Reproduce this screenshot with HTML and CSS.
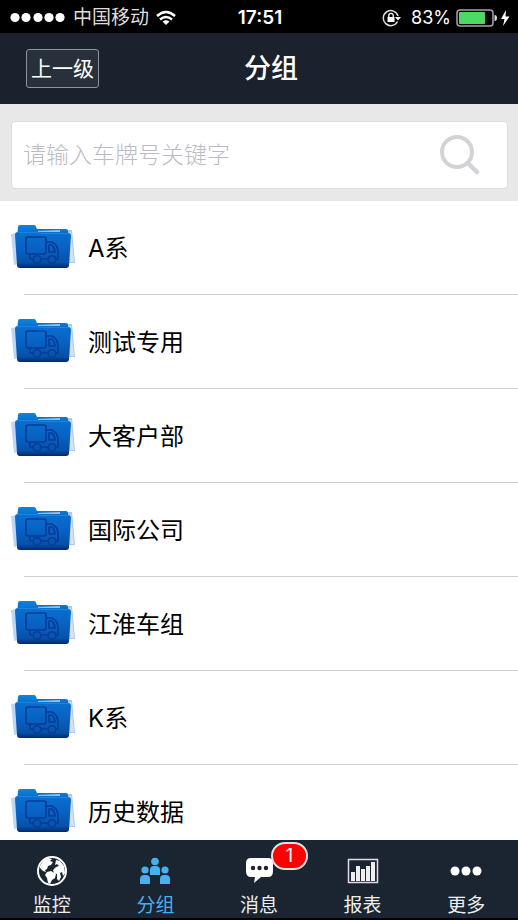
FILE: index.html
```html
<!DOCTYPE html>
<html lang="zh-CN">
<head>
  <meta charset="UTF-8" />
  <meta name="viewport" content="width=device-width, initial-scale=1.0"/>
  <title>分组</title>
  <link rel="stylesheet" href="styles.css">
</head>
<body>
  <!-- Shared icons -->
  <svg class="sprite" width="0" height="0" aria-hidden="true">
    <defs>
      <linearGradient id="folder-front" x1="0" y1="0" x2="0" y2="1">
        <stop offset="0" stop-color="#0a6fd0"/>
        <stop offset="0.5" stop-color="#0760c2"/>
        <stop offset="0.85" stop-color="#0650a8"/>
        <stop offset="1" stop-color="#03286a"/>
      </linearGradient>
      <linearGradient id="folder-back" x1="0" y1="0" x2="0" y2="1">
        <stop offset="0" stop-color="#0b84e0"/>
        <stop offset="1" stop-color="#0661bd"/>
      </linearGradient>
      <symbol id="folder" viewBox="0 0 64 46">
        <path d="M0 10l6-1 3 31-6 1z" fill="#bdd6f5"/>
        <path d="M56 6h5l3 33h-8z" fill="#a9c8f5"/>
        <path d="M59 8h1l3 30h-4z" fill="#d2e2fb"/>
        <path d="M7 3q0-2 2-2h14q2 0 2 2l1 2h29q2 0 2 2v7H6z" fill="url(#folder-back)"/>
        <path d="M27 7l22-1v2H27z" fill="#8fc3f0"/>
        <path d="M7 8h19l4 1h27q3 0 3 3l-2 29q0 3-3 3H9q-3 0-3-3L4 11q0-3 3-3z" fill="url(#folder-front)"/>
        <path d="M7 8.500h19l4 1h27" fill="none" stroke="#1d83dc"/>
        <g fill="none" stroke="#053c96" stroke-width="1.600" stroke-linejoin="round">
          <rect x="15" y="13" width="20" height="17" rx="2"/>
          <path d="M19 30v5h3M30 35h7M35 18h6q6 3 6 10v7h-2M38 21h3q3 3 3 7h-6z"/>
          <circle cx="26" cy="35.500" r="3.800"/>
          <circle cx="41" cy="35.500" r="3.800"/>
        </g>
      </symbol>
    </defs>
  </svg>

  <div class="app">
    <div class="status-bar">
      <div class="status-left">
        <svg class="signal" width="56" height="11" viewBox="0 0 56 11" fill="#fff">
          <circle cx="5" cy="5.5" r="4.6"/><circle cx="16" cy="5.5" r="4.6"/><circle cx="28" cy="5.5" r="4.6"/><circle cx="39" cy="5.5" r="4.6"/><circle cx="50" cy="5.5" r="4.6"/>
        </svg>
        <span>中国移动</span>
        <svg width="20" height="16" viewBox="0 0 20 16" fill="none" stroke="#fff" stroke-width="2.4">
          <path d="M1 6q9-8 18 0M4 9.500q6-5 12 0"/>
          <path d="M10 15l-3.500-3.500q3.500-2.500 7 0z" fill="#fff" stroke="none"/>
        </svg>
      </div>
      <time class="clock">17:51</time>
      <div class="status-right">
        <svg class="lock" width="19" height="18" viewBox="0 0 19 18">
          <path d="M15.500 12.500A7.500 7.500 0 1 1 16 7" fill="none" stroke="#ddd" stroke-width="1.500"/>
          <path d="M13 8h6l-3 3.500z" fill="#fff"/>
          <rect x="5.500" y="8" width="7" height="5" fill="#fff"/>
          <path d="M6.800 8V6.500a2.200 2.200 0 0 1 4.400 0V8" fill="none" stroke="#fff" stroke-width="1.300"/>
        </svg>
        <span>83%</span>
        <svg width="54" height="18" viewBox="0 0 54 18">
          <rect x="1" y="1" width="36" height="16" rx="3" fill="none" stroke="#a5a5a5" stroke-width="1.500"/>
          <rect x="3" y="3" width="26" height="12" rx="1" fill="#4cd964"/>
          <path d="M38.500 6q2.500 0 2.500 3t-2.500 3z" fill="#ddd"/>
          <path d="M50 1l-5 9h3.500L47 17l6.500-9.500h-4z" fill="#fff"/>
        </svg>
      </div>
    </div>

    <header class="header">
      <button class="back-btn" type="button">上一级</button>
      <h1>分组</h1>
    </header>

    <form class="search" role="search">
      <div class="search-box">
        <input type="text" placeholder="请输入车牌号关键字" aria-label="请输入车牌号关键字" />
        <button class="search-btn" type="button" aria-label="搜索">
          <svg width="40" height="40" viewBox="0 0 40 40" fill="none" stroke="#d1d3d7" stroke-width="4">
            <circle cx="17" cy="17" r="15"/>
            <path d="M28 28l9 9" stroke-width="4.500" stroke-linecap="round"/>
          </svg>
        </button>
      </div>
    </form>

    <main class="content">
      <ul class="groups">
        <li><a href="#"><svg class="folder"><use href="#folder"/></svg>A系</a></li>
        <li><a href="#"><svg class="folder"><use href="#folder"/></svg>测试专用</a></li>
        <li><a href="#"><svg class="folder"><use href="#folder"/></svg>大客户部</a></li>
        <li><a href="#"><svg class="folder"><use href="#folder"/></svg>国际公司</a></li>
        <li><a href="#"><svg class="folder"><use href="#folder"/></svg>江淮车组</a></li>
        <li><a href="#"><svg class="folder"><use href="#folder"/></svg>K系</a></li>
        <li><a href="#"><svg class="folder"><use href="#folder"/></svg>历史数据</a></li>
      </ul>
    </main>

    <nav class="tabs">
      <a href="#">
        <svg width="32" height="32" viewBox="0 0 32 32">
          <circle cx="16" cy="16" r="14" fill="none" stroke="#fff" stroke-width="2"/>
          <path d="M4 11l3-5 5-3 4 1-2 2 3 1-2 3-3 1-1 3-2 1 1 2-3-1-3-3zM11 17l4-1 5 3-1 4-3 2-2 4-2-1-1-5-2-3zM20 5l4 1 4 5 1 7-2 3-1-4-2 1 1 4-2 4-2-2v-5l-3-1-1-3 3-3 3-1-2-2-2 1z" fill="#fff"/>
        </svg>
        <span>监控</span>
      </a>
      <a class="active" href="#">
        <svg width="32" height="32" viewBox="0 0 32 32" fill="currentColor">
          <circle cx="16" cy="6.500" r="3.800"/>
          <circle cx="6" cy="15" r="3.600"/>
          <circle cx="26" cy="15" r="3.600"/>
          <path d="M11 20v-5q0-4 4-4h2q4 0 4 4v5zM1 29v-5q0-4 4-4h2q4 0 4 4v5zM21 29v-5q0-4 4-4h2q4 0 4 4v5z"/>
        </svg>
        <span>分组</span>
      </a>
      <a class="messages" href="#">
        <svg width="32" height="32" viewBox="0 0 32 32">
          <path d="M8 3h17q5 0 5 5v8q0 6-5 6h-7l-7 6 1-6H8q-5 0-5-6V8q0-5 5-5z" fill="#fff"/>
          <g fill="#1b2431"><circle cx="10" cy="13" r="2.200"/><circle cx="16.500" cy="13" r="2.200"/><circle cx="23" cy="13" r="2.200"/></g>
        </svg>
        <span>消息</span>
        <span class="badge">1</span>
      </a>
      <a href="#">
        <svg width="32" height="32" viewBox="0 0 32 32">
          <rect x="1.500" y="4.500" width="29" height="23" fill="none" stroke="#dedbe6" stroke-width="1.500"/>
          <path d="M4 17h4v9H4zM9 11h4v15H9zM14 14h4v12h-4zM19 11h4v15h-4zM24 7h4v19h-4z" fill="#eee"/>
        </svg>
        <span>报表</span>
      </a>
      <a href="#">
        <svg width="32" height="32" viewBox="0 0 32 32" fill="#fff">
          <circle cx="5" cy="16" r="4.500"/><circle cx="16" cy="16" r="4.500"/><circle cx="27" cy="16" r="4.500"/>
        </svg>
        <span>更多</span>
      </a>
    </nav>
  </div>
</body>
</html>
```

FILE: styles.css
```css
* {
  box-sizing: border-box;
  margin: 0;
  padding: 0;
  font-family: Inter, 'Noto Sans CJK SC', sans-serif;
}

body {
  background: #fff;
  color: #000;
}

a {
  color: inherit;
  text-decoration: none;
}

svg {
  display: block;
  flex-shrink: 0;
}

.sprite {
  position: absolute;
}

.app {
  display: flex;
  flex-direction: column;
  height: 100vh;
}

/* Status bar */
.status-bar {
  display: grid;
  grid-template-columns: 1fr auto 1fr;
  align-items: center;
  height: 33px;
  padding: 0 8px 0 10px;
  background: #000;
  color: #fff;
  font-size: 19px;
  line-height: 35px;
}

.status-left,
.status-right {
  display: flex;
  align-items: center;
}

.status-left {
  gap: 7px;
  color: #ddd;
}

.status-right {
  justify-content: flex-end;
  gap: 5px;
  font-size: 18px;
}

.lock {
  margin-right: 5px;
}

.clock {
  font-weight: 600;
}

/* Header */
.header {
  display: grid;
  grid-template-columns: 1fr auto 1fr;
  align-items: center;
  padding: 16px 2px 16px 26px;
  background: #1b212d;
  color: #fff;
}

.back-btn {
  justify-self: start;
  padding: 0 4px;
  background: #28303b;
  border: 1px solid #8f949d;
  border-radius: 3px;
  color: #fff;
  font-size: 21px;
  line-height: 37px;
  cursor: pointer;
}

.header h1 {
  font-size: 27px;
  font-weight: 500;
  line-height: 39px;
}

/* Search */
.search {
  padding: 17px 10px 12px 11px;
  background: #e9e8e9;
}

.search-box {
  display: flex;
  align-items: center;
  height: 68px;
  padding: 0 27px 0 11px;
  background: #fff;
  border: 1px solid #dddde0;
  border-radius: 4px;
}

.search-box input {
  flex: 1;
  min-width: 0;
  border: none;
  outline: none;
  background: none;
  font-size: 23px;
  font-weight: 300;
  line-height: 34px;
}

.search-box input::placeholder {
  color: #bbbbc5;
}

.search-btn {
  background: none;
  border: none;
  cursor: pointer;
}

/* Group list */
.content {
  flex: 1;
  min-height: 0;
  overflow: hidden;
}

.groups {
  list-style: none;
}

.groups li::after {
  content: "";
  display: block;
  height: 1px;
  margin-left: 24px;
  background: #cfcfcf;
}

.groups a {
  display: flex;
  align-items: center;
  gap: 13px;
  height: 93px;
  padding: 0 11px 2px;
  font-size: 24px;
}

.folder {
  width: 64px;
  height: 46px;
}

/* Bottom tabs */
.tabs {
  display: grid;
  grid-template-columns: repeat(5, 1fr);
  padding: 15px 0 0;
  background: #1b2431;
  border-bottom: 2px solid #050008;
  color: #eee;
}

.tabs a {
  position: relative;
  display: flex;
  flex-direction: column;
  align-items: center;
  gap: 7px;
  font-size: 19px;
  line-height: 24px;
}

.tabs .active {
  color: #46b1f1;
}

.badge {
  position: absolute;
  top: -13px;
  left: calc(50% + 12px);
  width: 37px;
  border: 2px solid #e8dede;
  border-radius: 14px;
  background: #fe0000;
  color: #fff;
  font-size: 18px;
  text-align: center;
}
```
